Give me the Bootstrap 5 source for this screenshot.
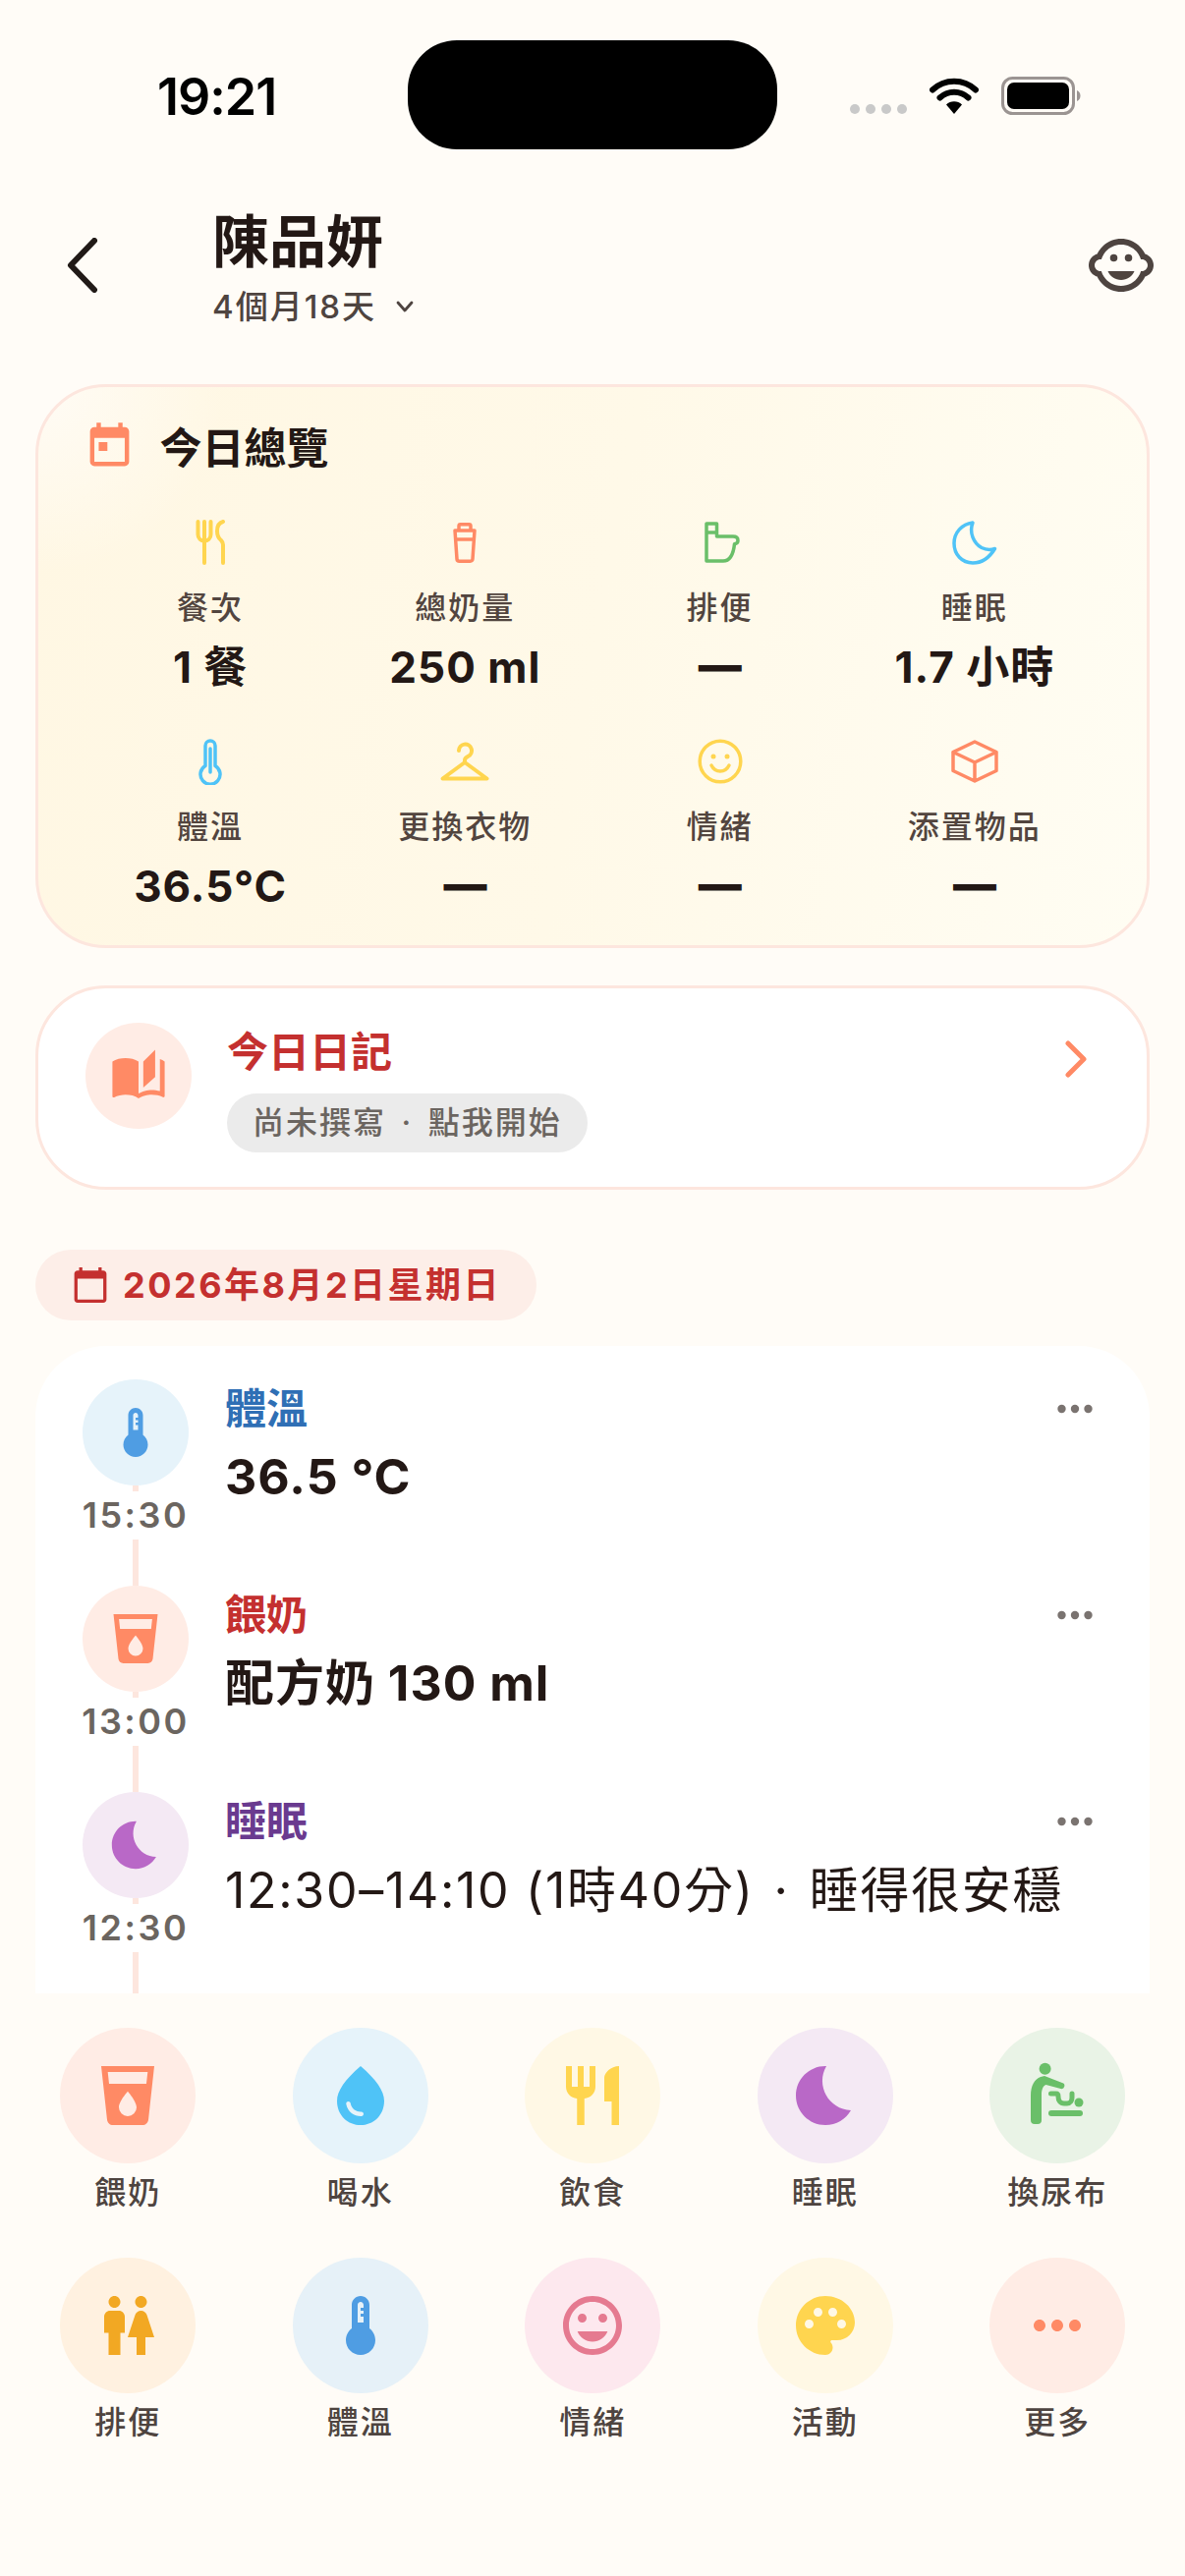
<!DOCTYPE html>
<html lang="zh-Hant">
<head>
    <meta charset="UTF-8">
    <meta name="viewport" content="width=device-width, initial-scale=1.0">
    <title>陳品妍 - 今日總覽</title>
    <link href="https://cdn.jsdelivr.net/npm/bootstrap@5.3.0/dist/css/bootstrap.min.css" rel="stylesheet">
    <style>
        body { width: 1206px; height: 2622px; overflow: hidden; background: #fffcf7; color: #231815; font-family: Inter, "Noto Sans CJK TC", sans-serif; }
        svg { display: block; flex-shrink: 0; }

        .status-bar { padding: 41px 0 0 160px; height: 152px; }
        .clock { width: 255px; padding-top: 2px; font: 600 52px/111px Inter, sans-serif; letter-spacing: -1px; color: #000; }
        .island { width: 376px; height: 111px; background: #000; border-radius: 50px; margin-right: 74px; }
        .signal-dots { gap: 6px; margin-top: 65px; margin-right: 23px; }
        .signal-dots span { width: 10px; height: 10px; border-radius: 5px; background: #c9c9c9; }
        .wifi-ico { margin-top: 38px; }
        .batt-ico { margin: 37px 0 0 23px; }

        .top-head { margin-top: 60px; padding: 0 29.5px 0 68px; }
        .back-btn { margin: 30px 116px 0 0; }
        .kid-name { font-size: 58px; line-height: 68px; font-weight: 700; }
        .kid-age { margin-top: 10px; height: 44px; font-size: 33px; line-height: 44px; letter-spacing: 2px; font-weight: 500; color: #4e4440; gap: 20px; }
        .kid-ico { margin-top: 22px; }

        .ov-card { margin: 57px 36px 0; height: 574px; background: radial-gradient(circle at 0 0, rgba(255,252,247,.9) 0, rgba(255,252,247,0) 190px), linear-gradient(100deg, #fff7e3 0%, #fff9e8 50%, #fffdf3 100%); border: 3px solid #fde6de; border-radius: 72px; padding: 34px 45.5px 0; }
        .ov-title { height: 53px; gap: 25px; font-size: 43px; line-height: 53px; font-weight: 700; margin-bottom: 47px; }
        .ov-title span { margin-top: 4px; }
        .ov-grid { width: 1037px; row-gap: 48px; }
        .ov-ico { height: 48px; }
        .ov-label { margin-top: 23px; font-size: 32px; line-height: 40px; letter-spacing: 2px; font-weight: 500; color: #52453f; }
        .ov-val { margin-top: 16px; font-size: 44px; line-height: 48px; font-weight: 700; letter-spacing: 1px; white-space: nowrap; }
        .no-val { margin-top: 14px; font-weight: 900; letter-spacing: 0; }
        .toilet-ico { margin-left: 5px; }

        .diary-card { margin: 38px 36px 0; height: 208px; background: #fff; border: 3px solid #fde6de; border-radius: 72px; padding: 35px 60px 0 48px; }
        .diary-ico { width: 108px; height: 108px; background: #ffece5; margin-right: 36px; }
        .diary-title { margin-top: 5px; font-size: 42px; line-height: 50px; font-weight: 700; color: #c4302f; }
        .diary-pill { margin-top: 17px; height: 60px; padding: 0 26px; background: #ebebeb; font-size: 32px; line-height: 60px; font-weight: 500; letter-spacing: 2px; word-spacing: 5px; color: #6b6560; white-space: nowrap; }
        .diary-go { margin-top: 18px; }

        .date-pill { margin: 61px 0 0 36px; width: 510px; height: 72px; padding-left: 38px; gap: 15px; background: #fdeee8; font-size: 36px; line-height: 72px; font-weight: 700; letter-spacing: 2.500px; color: #c4302f; }

        .tl-card { margin: 26px 36px 0; height: 659px; padding: 34px 58px 0 48px; background: #fff; border-radius: 72px 72px 0 0; overflow: hidden; }
        .tl-item { height: 210px; }
        .tl-left { width: 108px; margin-right: 37px; }
        .tl-ico { width: 108px; height: 108px; }
        .tl-stub { width: 6px; background: #fde6de; }
        .tl-stub-a { height: 6px; }
        .tl-time { height: 49px; font-size: 36px; line-height: 49px; font-weight: 600; letter-spacing: 2.500px; color: #6b6560; white-space: nowrap; }
        .tl-title { margin-top: 5px; font-size: 42px; line-height: 50px; font-weight: 700; }
        .tl-val { margin-top: 14px; font-size: 50px; line-height: 60px; font-weight: 700; letter-spacing: 1px; white-space: nowrap; }
        .tl-val-plain { font-weight: 400; letter-spacing: 1.700px; padding-top: 1px; }
        .dot-sep { margin: 0 20px; }

        .quick-grid { width: 1182.5px; margin: 35px 0 0 12px; row-gap: 46px; }
        .quick-ico { width: 138px; height: 138px; }
        .quick-label { margin-top: 10px; font-size: 32px; line-height: 40px; font-weight: 500; letter-spacing: 2px; color: #4e4440; }

        .bg-feed { background: #ffece5; } .bg-water { background: #e6f3fa; } .bg-food { background: #fff8e5; }
        .bg-sleep { background: #f4e9f4; } .bg-diaper { background: #e9f3e6; } .bg-poo { background: #fff1e0; }
        .bg-temp { background: #e6f1f8; } .bg-mood { background: #fde8ee; }
        .c-feed { fill: #ff8a65; } .c-water { fill: #4fc3f7; } .c-food { fill: #ffd54f; } .c-sleep { fill: #b968c7; }
        .c-diaper { fill: #6abf69; } .c-poo { fill: #f2a823; } .c-temp { fill: #4f9de3; } .c-mood { fill: #e57a90; }
        .t-temp { color: #2f6fb5; } .t-feed { color: #c4302f; } .t-sleep { color: #6a3a8f; }
        .ln { fill: none; stroke-linecap: round; stroke-linejoin: round; }
    </style>
</head>
<body>
<svg class="d-none">
    <symbol id="i-cup" viewBox="0 0 24 24"><path d="M18.32,8H5.67L5.23,4H18.77M12,19A3,3 0 0,1 9,16C9,14 12,10.6 12,10.6C12,10.6 15,14 15,16A3,3 0 0,1 12,19M3,2L5,20.23C5.13,21.23 5.97,22 7,22H17C18,22 18.87,21.23 19,20.23L21,2H3Z"/></symbol>
    <symbol id="i-therm" viewBox="0 0 24 24"><path d="M15 13V5c0-1.66-1.34-3-3-3S9 3.34 9 5v8c-1.21.91-2 2.37-2 4 0 2.76 2.24 5 5 5s5-2.24 5-5c0-1.63-.79-3.09-2-4zm-4-2V5c0-.55.45-1 1-1s1 .55 1 1v1h-1v1h1v1h-1v1h1v2h-2z"/></symbol>
    <symbol id="i-moon" viewBox="0 0 24 24"><path d="M12.34 2.02C6.59 1.82 2 6.42 2 12c0 5.52 4.48 10 10 10 3.71 0 6.93-2.02 8.66-5.02-7.51-.25-12.09-8.43-8.32-14.96z"/></symbol>
    <symbol id="i-dots" viewBox="0 0 36 10"><circle cx="4.5" cy="5" r="4.2"/><circle cx="18" cy="5" r="4.2"/><circle cx="31.5" cy="5" r="4.2"/></symbol>
</svg>

<div class="status-bar d-flex align-items-start">
    <div class="clock">19:21</div>
    <div class="island"></div>
    <div class="signal-dots d-flex"><span></span><span></span><span></span><span></span></div>
    <svg class="wifi-ico" width="50" height="37" viewBox="0 0 50 37"><path class="ln" d="M3 12.5A32 32 0 0 1 47 12.5M10.5 20.5A21 21 0 0 1 39.5 20.5" stroke="#000" stroke-width="6"/><path d="M17 27.5A11.5 11.5 0 0 1 33 27.5L25 37Z"/></svg>
    <svg class="batt-ico" width="81" height="39" viewBox="0 0 81 39"><rect x="1.5" y="1.5" width="72" height="36" rx="10" fill="none" stroke="#9b9492" stroke-width="3"/><rect x="6" y="6" width="63" height="27" rx="7"/><path d="M77 14c2.500 1 3.500 3 3.500 5.500s-1 4.500-3.500 5.500z" fill="#9b9492"/></svg>
</div>

<header class="top-head d-flex align-items-start">
    <svg class="back-btn" width="32" height="56" viewBox="0 0 32 56"><path class="ln" d="M28 3L4 28L28 53" stroke="#211a17" stroke-width="6"/></svg>
    <div>
        <div class="kid-name">陳品妍</div>
        <div class="kid-age d-flex align-items-center">4個月18天
            <svg width="18" height="12" viewBox="0 0 18 12"><path class="ln" d="M2 2L9 10L16 2" stroke="#4e4440" stroke-width="2.800"/></svg>
        </div>
    </div>
    <svg class="ms-auto kid-ico" width="72" height="72" viewBox="0 0 24 24" fill="#4e4440"><circle cx="14.500" cy="9.500" r="1.250"/><circle cx="9.500" cy="9.500" r="1.250"/><path d="M22.940 12.660c.04-.21.06-.43.06-.66s-.02-.45-.06-.66c-.25-1.510-1.360-2.740-2.810-3.170-.53-1.120-1.280-2.100-2.190-2.910C16.360 3.850 14.280 3 12 3s-4.360.85-5.940 2.260c-.92.81-1.670 1.800-2.190 2.910-1.450.43-2.560 1.650-2.810 3.170-.04.21-.06.43-.06.66s.02.45.06.66c.25 1.510 1.360 2.740 2.810 3.170.52 1.110 1.270 2.090 2.170 2.890C7.620 20.140 9.710 21 12 21s4.380-.86 5.970-2.280c.9-.8 1.650-1.790 2.170-2.890 1.440-.43 2.550-1.650 2.800-3.170zM19 14c-.1 0-.19-.02-.29-.03-.2.67-.49 1.290-.86 1.860C16.600 17.740 14.450 19 12 19s-4.600-1.260-5.850-3.170c-.37-.57-.66-1.190-.86-1.860-.1.01-.19.03-.29.03-1.100 0-2-.9-2-2s.9-2 2-2c.1 0 .19.02.29.03.2-.67.49-1.290.86-1.860C7.400 6.260 9.550 5 12 5s4.600 1.260 5.850 3.170c.37.57.66 1.190.86 1.860.1-.01.19-.03.29-.03 1.100 0 2 .9 2 2s-.9 2-2 2zM7.500 14c.76 1.770 2.490 3 4.500 3s3.740-1.230 4.500-3h-9z"/></svg>
</header>

<section class="card ov-card">
    <div class="ov-title d-flex align-items-center">
        <svg width="53" height="53" viewBox="0 0 24 24" fill="#ff8a65"><path d="M19 3h-1V1h-2v2H8V1H6v2H5c-1.110 0-1.990.9-1.990 2L3 19c0 1.100.89 2 2 2h14c1.100 0 2-.9 2-2V5c0-1.100-.9-2-2-2zm0 16H5V8h14v11zM7 10h4v4H7z"/></svg>
        <span>今日總覽</span>
    </div>
    <div class="row row-cols-4 g-0 ov-grid text-center">
        <div class="col">
            <div class="ov-ico d-flex justify-content-center align-items-center"><svg width="30" height="46" viewBox="0 0 30 46"><path class="ln" stroke="#ffd54f" stroke-width="4" d="M2.500 2v13c0 4 3 6.500 6.500 6.500s6.500-2.500 6.500-6.500V2M9 2v42M28 2c-4 1-6 4-6 9.500 0 4.500 1.500 7.500 4 9.500 1.500 1.500 2 2.500 2 4.500v18.500"/></svg></div>
            <div class="ov-label">餐次</div><div class="ov-val">1 餐</div>
        </div>
        <div class="col">
            <div class="ov-ico d-flex justify-content-center align-items-center"><svg width="24" height="41" viewBox="0 0 24 41"><path class="ln" stroke="#ff8a65" stroke-width="3.500" d="M6 8V3.500Q6 1.800 7.500 1.800h9Q18 1.800 18 3.500V8M2 8h20l-2 29q-.2 2.200-2.500 2.200h-11Q4.200 39.200 4 37zM3 17h18"/></svg></div>
            <div class="ov-label">總奶量</div><div class="ov-val">250 ml</div>
        </div>
        <div class="col">
            <div class="ov-ico d-flex justify-content-center align-items-center"><svg class="toilet-ico" width="36" height="42" viewBox="0 0 36 42"><path class="ln" stroke="#6abf69" stroke-width="3.500" d="M2 40V2h10.500v13H29c3.500 0 5 2 5 4.200 0 1.500-1 3-3.500 3.500C29.500 32 26 40 19 40zM2 11h10.500"/></svg></div>
            <div class="ov-label">排便</div><div class="ov-val no-val">—</div>
        </div>
        <div class="col">
            <div class="ov-ico d-flex justify-content-center align-items-center"><svg width="46" height="45" viewBox="0 0 46 45"><path class="ln" stroke="#4fc3f7" stroke-width="3.500" d="M21 2C10 3.500 2 12 2 23c0 11.500 8 20 19 20 9.500 0 17-5.500 22.500-14.500-4.500 1.500-9.500 1-13.500-1C22 23 17 12 21 2z"/></svg></div>
            <div class="ov-label">睡眠</div><div class="ov-val">1.7 小時</div>
        </div>
        <div class="col">
            <div class="ov-ico d-flex justify-content-center align-items-center"><svg width="24" height="47" viewBox="0 0 24 47"><path class="ln" stroke="#4fc3f7" stroke-width="3.500" d="M7 27.500V7a5 5 0 0 1 10 0v20.500a10 10 0 1 1-10 0zM12 10v24"/></svg></div>
            <div class="ov-label">體溫</div><div class="ov-val">36.5°C</div>
        </div>
        <div class="col">
            <div class="ov-ico d-flex justify-content-center align-items-center"><svg width="50" height="40" viewBox="0 0 50 40"><path class="ln" stroke="#ffd54f" stroke-width="4" d="M19 9a6.500 6.500 0 1 1 9.500 5.800c-2 1-3.500 2-3.500 4v2.200L47.500 37.500h-45L25 21"/></svg></div>
            <div class="ov-label">更換衣物</div><div class="ov-val no-val">—</div>
        </div>
        <div class="col">
            <div class="ov-ico d-flex justify-content-center align-items-center"><svg width="46" height="46" viewBox="0 0 46 46"><circle class="ln" cx="23" cy="23" r="20.800" stroke="#ffd54f" stroke-width="3.500"/><circle cx="16" cy="18" r="2.500" fill="#ffd54f"/><circle cx="30" cy="18" r="2.500" fill="#ffd54f"/><path class="ln" stroke="#ffd54f" stroke-width="3.500" d="M14 27c2 4 5.500 6 9 6s7-2 9-6"/></svg></div>
            <div class="ov-label">情緒</div><div class="ov-val no-val">—</div>
        </div>
        <div class="col">
            <div class="ov-ico d-flex justify-content-center align-items-center"><svg width="48" height="44" viewBox="0 0 48 44"><path class="ln" stroke="#ff8a65" stroke-width="3.500" d="M24 2L46 12.500V31.500L24 42L2 31.500V12.500ZM2 12.500L24 23L46 12.500M24 23V42"/></svg></div>
            <div class="ov-label">添置物品</div><div class="ov-val no-val">—</div>
        </div>
    </div>
</section>

<section class="card flex-row diary-card">
    <div class="diary-ico rounded-circle d-flex justify-content-center align-items-center">
        <svg width="58" height="58" viewBox="0 0 24 24" fill="#ff8a65"><path d="M19 1l-5 5v11l5-4.500V1zM1 6v14.650c0 .25.25.5.5.5.1 0 .15-.05.25-.05C3.100 20.450 5.050 20 6.500 20c1.950 0 4.050.4 5.500 1.500V6c-1.450-1.100-3.550-1.500-5.500-1.500S2.450 4.900 1 6zm22 13.500V6c-.6-.45-1.250-.8-2-1.050v13.500c-1.100-.35-2.300-.5-3.500-.5-1.700 0-4.150.65-5.500 1.500v2.050c1.350-.85 3.800-1.500 5.500-1.500 1.650 0 3.350.3 4.750 1.050.1.05.15.05.25.05.25 0 .5-.25.5-.5v-1.100z"/></svg>
    </div>
    <div>
        <div class="diary-title">今日日記</div>
        <div class="diary-pill rounded-pill d-inline-block">尚未撰寫 · 點我開始</div>
    </div>
    <svg class="ms-auto diary-go" width="24" height="38" viewBox="0 0 24 38"><path class="ln" stroke="#ff8a65" stroke-width="5" d="M4 3L20 19L4 35"/></svg>
</section>

<div class="date-pill d-inline-flex align-items-center rounded-pill">
    <svg width="36" height="36" viewBox="2 1 20 22" fill="#c4302f"><path d="M20 3h-1V1h-2v2H7V1H5v2H4c-1.100 0-2 .9-2 2v16c0 1.100.9 2 2 2h16c1.100 0 2-.9 2-2V5c0-1.100-.9-2-2-2zm0 18H4V8h16v13z"/></svg>
    2026年8月2日星期日
</div>

<section class="tl-card">
    <div class="tl-item d-flex">
        <div class="tl-left d-flex flex-column align-items-center">
            <div class="tl-ico rounded-circle bg-water d-flex justify-content-center align-items-center"><svg class="c-temp" width="60" height="60"><use href="#i-therm"/></svg></div>
            <div class="tl-stub tl-stub-a"></div>
            <div class="tl-time">15:30</div>
            <div class="tl-stub flex-grow-1"></div>
        </div>
        <div class="flex-grow-1">
            <div class="tl-title t-temp d-flex justify-content-between align-items-center">體溫<svg width="36" height="10" fill="#7a7370"><use href="#i-dots"/></svg></div>
            <div class="tl-val">36.5 °C</div>
        </div>
    </div>
    <div class="tl-item d-flex">
        <div class="tl-left d-flex flex-column align-items-center">
            <div class="tl-ico rounded-circle bg-feed d-flex justify-content-center align-items-center"><svg class="c-feed" width="60" height="60"><use href="#i-cup"/></svg></div>
            <div class="tl-stub tl-stub-a"></div>
            <div class="tl-time">13:00</div>
            <div class="tl-stub flex-grow-1"></div>
        </div>
        <div class="flex-grow-1">
            <div class="tl-title t-feed d-flex justify-content-between align-items-center">餵奶<svg width="36" height="10" fill="#7a7370"><use href="#i-dots"/></svg></div>
            <div class="tl-val">配方奶 130 ml</div>
        </div>
    </div>
    <div class="tl-item d-flex">
        <div class="tl-left d-flex flex-column align-items-center">
            <div class="tl-ico rounded-circle bg-sleep d-flex justify-content-center align-items-center"><svg class="c-sleep" width="58" height="58"><use href="#i-moon"/></svg></div>
            <div class="tl-stub tl-stub-a"></div>
            <div class="tl-time">12:30</div>
            <div class="tl-stub flex-grow-1"></div>
        </div>
        <div class="flex-grow-1">
            <div class="tl-title t-sleep d-flex justify-content-between align-items-center">睡眠<svg width="36" height="10" fill="#7a7370"><use href="#i-dots"/></svg></div>
            <div class="tl-val tl-val-plain">12:30–14:10 (1時40分)<span class="dot-sep">·</span>睡得很安穩</div>
        </div>
    </div>
</section>

<section class="row row-cols-5 g-0 quick-grid text-center">
    <div class="col"><div class="quick-ico rounded-circle bg-feed mx-auto d-flex justify-content-center align-items-center"><svg class="c-feed" width="72" height="72"><use href="#i-cup"/></svg></div><div class="quick-label">餵奶</div></div>
    <div class="col"><div class="quick-ico rounded-circle bg-water mx-auto d-flex justify-content-center align-items-center"><svg class="c-water" width="72" height="72" viewBox="0 0 24 24"><path d="M12 2c-5.330 4.550-8 8.480-8 11.800 0 4.980 3.800 8.200 8 8.200s8-3.220 8-8.200c0-3.320-2.670-7.250-8-11.800zM7.830 14c.37 0 .67.26.74.62.41 2.220 2.280 2.980 3.640 2.870.43-.02.79.32.79.75 0 .4-.32.73-.72.75-2.130.13-4.620-1.090-5.190-4.120-.08-.45.28-.87.74-.87z"/></svg></div><div class="quick-label">喝水</div></div>
    <div class="col"><div class="quick-ico rounded-circle bg-food mx-auto d-flex justify-content-center align-items-center"><svg class="c-food" width="72" height="72" viewBox="0 0 24 24"><path d="M11 9H9V2H7v7H5V2H3v7c0 2.120 1.660 3.840 3.750 3.970V22h2.500v-9.030C11.340 12.840 13 11.120 13 9V2h-2v7zm5-3v8h2.500v8H21V2c-2.760 0-5 2.240-5 4z"/></svg></div><div class="quick-label">飲食</div></div>
    <div class="col"><div class="quick-ico rounded-circle bg-sleep mx-auto d-flex justify-content-center align-items-center"><svg class="c-sleep" width="72" height="72"><use href="#i-moon"/></svg></div><div class="quick-label">睡眠</div></div>
    <div class="col"><div class="quick-ico rounded-circle bg-diaper mx-auto d-flex justify-content-center align-items-center"><svg class="c-diaper" width="72" height="72" viewBox="0 0 72 72"><circle cx="23.600" cy="8.700" r="6"/><path d="M9 36c0-10 4-17 10-19l4-1 18 7a3 3 0 0 1-1.500 6l-15-4c-3 1-4.500 5-4.500 10v26a4 4 0 0 1-4 4h-3a4 4 0 0 1-4-4z"/><rect x="27" y="51" width="35" height="6" rx="3"/><circle cx="58" cy="43" r="4.500"/><path class="ln" stroke="#6abf69" stroke-width="5" d="M29.500 34h5.500c1.500 0 2 1 2 3 0 4 2 7 6 7h3c3.500 0 5-3 5-6v-4"/></svg></div><div class="quick-label">換尿布</div></div>
    <div class="col"><div class="quick-ico rounded-circle bg-poo mx-auto d-flex justify-content-center align-items-center"><svg class="c-poo" width="72" height="72" viewBox="0 0 24 24"><path d="M5.500 22v-7.500H4V9c0-1.100.9-2 2-2h3c1.100 0 2 .9 2 2v5.500H9.500V22h-4zM18 22v-6h3l-2.540-7.630C18.180 7.550 17.420 7 16.560 7h-.12c-.86 0-1.630.55-1.900 1.370L12 16h3v6h3zM7.500 6c1.110 0 2-.89 2-2s-.89-2-2-2-2 .89-2 2 .89 2 2 2zm9 0c1.110 0 2-.89 2-2s-.89-2-2-2-2 .89-2 2 .89 2 2 2z"/></svg></div><div class="quick-label">排便</div></div>
    <div class="col"><div class="quick-ico rounded-circle bg-temp mx-auto d-flex justify-content-center align-items-center"><svg class="c-temp" width="72" height="72"><use href="#i-therm"/></svg></div><div class="quick-label">體溫</div></div>
    <div class="col"><div class="quick-ico rounded-circle bg-mood mx-auto d-flex justify-content-center align-items-center"><svg class="c-mood" width="72" height="72" viewBox="0 0 24 24"><path d="M11.990 2C6.470 2 2 6.480 2 12s4.470 10 9.990 10C17.520 22 22 17.520 22 12S17.520 2 11.990 2zM12 20c-4.420 0-8-3.580-8-8s3.580-8 8-8 8 3.580 8 8-3.580 8-8 8zm3.500-9c.83 0 1.500-.67 1.500-1.500S16.330 8 15.500 8 14 8.670 14 9.500s.67 1.500 1.500 1.500zm-7 0c.83 0 1.500-.67 1.500-1.500S9.330 8 8.500 8 7 8.670 7 9.500 7.670 11 8.500 11zm3.500 6.500c2.330 0 4.310-1.460 5.110-3.500H6.890c.8 2.040 2.780 3.500 5.110 3.500z"/></svg></div><div class="quick-label">情緒</div></div>
    <div class="col"><div class="quick-ico rounded-circle bg-food mx-auto d-flex justify-content-center align-items-center"><svg class="c-food" width="72" height="72" viewBox="0 0 24 24"><path d="M12 2C6.490 2 2 6.490 2 12s4.490 10 10 10c1.380 0 2.500-1.120 2.500-2.500 0-.61-.23-1.200-.64-1.670-.08-.1-.13-.21-.13-.33 0-.28.22-.5.5-.5H16c3.310 0 6-2.690 6-6 0-4.960-4.490-9-10-9zm5.500 11c-.83 0-1.500-.67-1.500-1.500s.67-1.500 1.500-1.500 1.500.67 1.500 1.500-.67 1.500-1.500 1.500zm-3-4c-.83 0-1.500-.67-1.500-1.500S13.670 6 14.500 6s1.500.67 1.500 1.500S15.330 9 14.500 9zM5 11.500c0-.83.67-1.500 1.500-1.500s1.500.67 1.500 1.500S7.330 13 6.500 13 5 12.330 5 11.500zm6-4c0 .83-.67 1.500-1.500 1.500S8 8.330 8 7.500 8.670 6 9.500 6s1.500.67 1.500 1.500z"/></svg></div><div class="quick-label">活動</div></div>
    <div class="col"><div class="quick-ico rounded-circle bg-feed mx-auto d-flex justify-content-center align-items-center"><svg class="c-feed" width="72" height="72" viewBox="0 0 24 24"><path d="M6 10c-1.100 0-2 .9-2 2s.9 2 2 2 2-.9 2-2-.9-2-2-2zm12 0c-1.100 0-2 .9-2 2s.9 2 2 2 2-.9 2-2-.9-2-2-2zm-6 0c-1.100 0-2 .9-2 2s.9 2 2 2 2-.9 2-2-.9-2-2-2z"/></svg></div><div class="quick-label">更多</div></div>
</section>

<script src="https://cdn.jsdelivr.net/npm/bootstrap@5.3.0/dist/js/bootstrap.bundle.min.js"></script>
</body>
</html>
